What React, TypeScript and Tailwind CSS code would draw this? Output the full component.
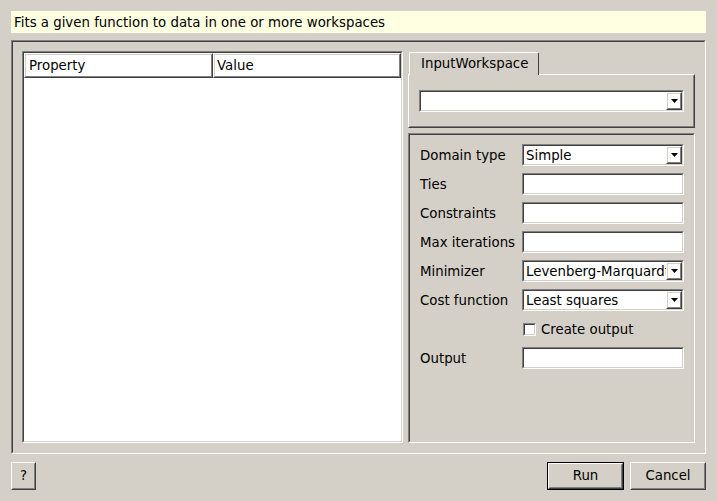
import React from "react";

type BoxProps = {
  className?: string;
  innerClassName?: string;
  children?: React.ReactNode;
};

function Sunken({ className = "", innerClassName = "", children }: BoxProps) {
  return (
    <div
      className={`border border-t-[#808080] border-l-[#808080] border-r-white border-b-white ${className}`}
    >
      <div
        className={`border border-t-[#404040] border-l-[#404040] border-r-[#d4d0c8] border-b-[#d4d0c8] w-full h-full ${innerClassName}`}
      >
        {children}
      </div>
    </div>
  );
}

function Raised({ className = "", innerClassName = "", children }: BoxProps) {
  return (
    <div
      className={`border border-t-white border-l-white border-r-[#404040] border-b-[#404040] ${className}`}
    >
      <div
        className={`border border-t-[#d4d0c8] border-l-[#d4d0c8] border-r-[#808080] border-b-[#808080] w-full h-full ${innerClassName}`}
      >
        {children}
      </div>
    </div>
  );
}

function Arrow() {
  return (
    <svg width="7" height="4" viewBox="0 0 7 4">
      <path d="M0 0H7L3.5 4Z" fill="#000" />
    </svg>
  );
}

function Combo({ value = "", className = "" }: { value?: string; className?: string }) {
  return (
    <Sunken className={`h-[22px] ${className}`} innerClassName="bg-white flex items-stretch">
      <div className="flex-1 min-w-0 overflow-hidden whitespace-nowrap pl-[2px] pt-[1px] flex items-center leading-none">
        {value}
      </div>
      <Raised className="w-[16px] shrink-0" innerClassName="flex items-center justify-center">
        <Arrow />
      </Raised>
    </Sunken>
  );
}

function TextField({ className = "" }: { className?: string }) {
  return <Sunken className={`h-[22px] ${className}`} innerClassName="bg-white" />;
}

function Row({ label, children }: { label: string; children: React.ReactNode }) {
  return (
    <div className="h-[22px] flex items-center">
      <div className="w-[102px] pt-[2px] leading-none whitespace-nowrap">{label}</div>
      {children}
    </div>
  );
}

export default function App() {
  return (
    <div className="w-[717px] h-[501px] bg-[#d4d0c8] text-black text-[13.33px] font-['DejaVu_Sans',sans-serif] px-[11px] pt-[11px] flex flex-col overflow-hidden">
      <div className="h-[22px] w-[695px] bg-[#ffffe1] flex items-center pl-[3px] pt-[2px] whitespace-nowrap leading-none">
        Fits a given function to data in one or more workspaces
      </div>

      <Sunken className="mt-[7px] w-[695px] h-[414px]" innerClassName="p-[9px] flex gap-[5px]">
        {/* Property table */}
        <Sunken className="w-[381px] h-full" innerClassName="bg-white flex flex-col">
          <div className="h-[25px] flex shrink-0">
            <Raised className="w-[189px] h-full" innerClassName="flex items-center pl-[3px] leading-none">
              Property
            </Raised>
            <Raised className="flex-1 h-full" innerClassName="flex items-center pl-[2px] leading-none">
              Value
            </Raised>
          </div>
        </Sunken>

        {/* Right column */}
        <div className="w-[287px] flex flex-col">
          <div className="h-[23px] flex shrink-0">
            <div className="relative z-10 ml-[1px] mt-[1px] h-[23px] w-[130px] bg-[#d4d0c8] border-t border-l border-r border-t-white border-l-white border-r-[#404040] rounded-t-[2px] flex items-center pl-[11px] leading-none whitespace-nowrap">
              InputWorkspace
            </div>
          </div>
          <Raised className="h-[54px] shrink-0" innerClassName="flex items-center px-[9px]">
            <Combo className="w-full" />
          </Raised>

          <Sunken className="mt-[5px] flex-1" innerClassName="pt-[9px] pl-[10px] flex flex-col gap-[7px]">
            <Row label="Domain type">
              <Combo value="Simple" className="w-[162px]" />
            </Row>
            <Row label="Ties">
              <TextField className="w-[162px]" />
            </Row>
            <Row label="Constraints">
              <TextField className="w-[162px]" />
            </Row>
            <Row label="Max iterations">
              <TextField className="w-[162px]" />
            </Row>
            <Row label="Minimizer">
              <Combo value="Levenberg-Marquardt" className="w-[162px]" />
            </Row>
            <Row label="Cost function">
              <Combo value="Least squares" className="w-[162px]" />
            </Row>
            <div className="h-[22px] flex items-center pl-[103px]">
              <Sunken className="w-[13px] h-[13px]" innerClassName="bg-white" />
              <span className="ml-[5px] pt-[1px] leading-none whitespace-nowrap">Create output</span>
            </div>
            <Row label="Output">
              <TextField className="w-[162px]" />
            </Row>
          </Sunken>
        </div>
      </Sunken>

      <div className="mt-[8px] h-[28px] w-[695px] flex">
        <Raised className="w-[25px] h-full" innerClassName="flex items-center justify-center leading-none">
          ?
        </Raised>
        <div className="ml-auto w-[77px] h-full border border-black">
          <Raised className="w-full h-full" innerClassName="flex items-center justify-center leading-none">
            Run
          </Raised>
        </div>
        <Raised className="ml-[6px] w-[76px] h-full" innerClassName="flex items-center justify-center leading-none">
          Cancel
        </Raised>
      </div>
    </div>
  );
}
